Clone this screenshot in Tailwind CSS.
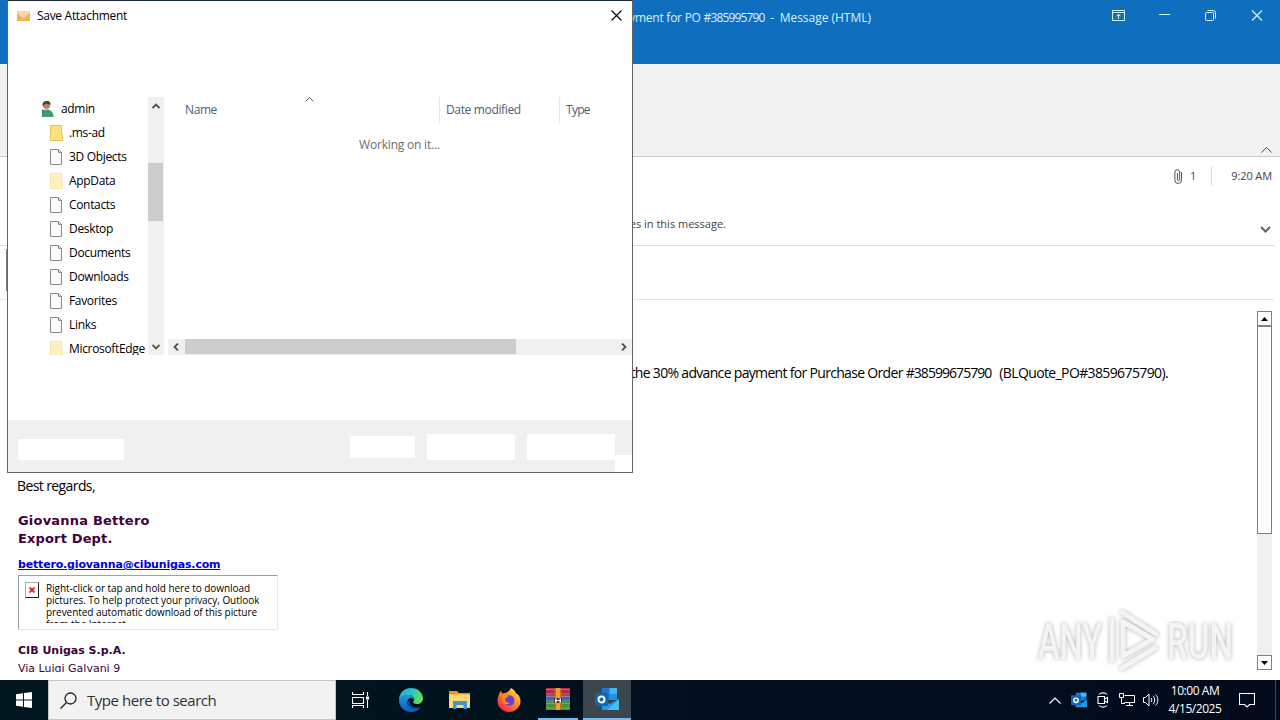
<!DOCTYPE html>
<html lang="en">
<head>
    <meta charset="UTF-8">
    <meta name="viewport" content="width=device-width, initial-scale=1.0">
    <title>Message (HTML)</title>
    <script src="https://cdn.jsdelivr.net/npm/@tailwindcss/browser@4"></script>
</head>
<body class="relative w-[1280px] h-[720px] overflow-hidden bg-white flex flex-col font-['Open_Sans','Noto_Sans',sans-serif] text-xs text-black">

    <!-- Message window title bar -->
    <header class="h-16 shrink-0 bg-[#106ebe] flex items-start justify-between text-[#d5f3ff]">
        <div class="w-[871px] h-9 leading-9 text-right whitespace-pre tracking-[-0.25px]">Payment for PO <span class="tracking-[-0.85px]">#385995790</span>  -  <span class="tracking-[-0.02px]">Message (HTML)</span></div>
        <div class="h-[30px] flex items-center gap-[33px] pr-[17px]">
            <svg class="w-[13px] h-[11px] mr-px" viewBox="0 0 13 11" fill="none" stroke="currentColor"><path d="M.5.5h12v10H.5zM.5 2.5h12M6.5 9V4.5M4.5 6.3l2-2 2 2" /></svg>
            <svg class="w-[11px] h-[11px]" viewBox="0 0 11 11" fill="none" stroke="currentColor"><path d="M0 4.500h11" /></svg>
            <svg class="w-[11px] h-[11px] ml-[2px]" viewBox="0 0 11 11" fill="none" stroke="currentColor"><rect x=".5" y="2.5" width="8" height="8" rx="1" /><path d="M2.5.5h5.500a2.500 2.500 0 0 1 2.500 2.500v5.500" /></svg>
            <svg class="w-[12px] h-[11px] ml-[2px]" viewBox="0 0 12 11" fill="none" stroke="currentColor" stroke-width="1.2"><path d="M1 .5l10 10M11 .5l-10 10" /></svg>
        </div>
    </header>

    <!-- Ribbon -->
    <div class="h-[93px] shrink-0 bg-[#f2f2f2] border-b border-[#cdcdcd] flex justify-end items-end pr-2 pb-[3px]">
        <svg class="w-[11px] h-[6px]" viewBox="0 0 11 6" fill="none" stroke="#505050"><path d="M.5 5.500l5-5 5 5" /></svg>
    </div>

    <!-- Message info -->
    <section class="h-[89px] shrink-0 mr-[6px] border-b border-[#dcdcdc] flex flex-col text-[#444]">
        <div class="h-[38px] flex items-center justify-end pr-[2px] text-[11px]">
            <svg class="w-[9px] h-[15px] mr-[7px]" viewBox="0 0 9 15" fill="none" stroke="#505050"><path d="M7.500 3v8.200a3.300 3.300 0 0 1-6.600 0V3a2.300 2.300 0 0 1 4.700 0v7.500a1.100 1.100 0 0 1-2.200 0V4" /></svg>
            <span class="w-[6px]">1</span>
            <span class="w-px h-5 bg-[#dcdcdc] ml-[15px] mr-[19px]"></span>
            <span class="w-[41px] whitespace-nowrap text-right tracking-[-0.1px]">9:20 AM</span>
        </div>
        <div class="h-[50px] flex items-start justify-between pr-[3px]">
            <span class="w-[726px] text-right pt-5 leading-[18px] text-[11px]">automatic download of some pictures in this message.</span>
            <svg class="w-[11px] h-[7px] mt-[31px]" viewBox="0 0 11 7" fill="none" stroke="#606060" stroke-width="2"><path d="M1 1l4.500 4.500L10 1" /></svg>
        </div>
    </section>
    <div class="h-[54px] shrink-0 mr-[6px] border-b border-[#e3e3e3] pl-[6px] pt-[3px]">
        <div class="w-px h-[42px] bg-[#808080]"></div>
    </div>

    <!-- Message body -->
    <main class="h-[380px] shrink-0 flex justify-between pt-[11px]">
        <div class="w-[1200px] h-[361px] overflow-hidden pl-[18px] whitespace-nowrap">
            <p class="w-[1150px] h-[165px] pt-[51px] text-right text-sm leading-[22px] whitespace-pre tracking-[-0.68px]">details of the 30% advance payment for Purchase Order <span class="tracking-[-0.95px]">#38599675790</span>  <span class="ml-[2px] tracking-[-0.62px]">(BLQuote_PO#3859675790).</span></p>
            <p class="-ml-px h-[36px] text-sm leading-[19px] tracking-[-0.6px]">Best regards,</p>
            <div class="font-['DejaVu_Sans',sans-serif] font-bold text-[#400040]">
                <p class="text-[13px] leading-[18px] tracking-[0.2px]">Giovanna Bettero</p>
                <p class="text-[13px] leading-[18px] tracking-[0.15px]">Export Dept.</p>
                <p class="text-[11px] leading-[16px] mt-[9px] tracking-[-0.17px] text-[#0000d8] underline">bettero.giovanna@cibunigas.com</p>
                <div class="w-[260px] h-[55px] mt-[2px] border border-[#e6e6e6] border-t-[#a0a0a0] border-l-[#a0a0a0] flex pl-[6px] pt-[6px]">
                    <div class="w-[14px] h-[16px] border border-[#b0b0b0] border-r-[#202020] border-b-[#202020] flex items-center justify-center shrink-0">
                        <svg class="w-[6px] h-[6px]" viewBox="0 0 6 6" stroke="#dc1414" stroke-width="1.700"><path d="M.5.5l5 5M5.500.5l-5 5" /></svg>
                    </div>
                    <p class="h-[41px] overflow-hidden ml-[7px] font-['Open_Sans',sans-serif] font-normal text-[10px] leading-[12px] tracking-[-0.05px] text-black">Right-click or tap and hold here to download<br>pictures. To help protect your privacy, Outlook<br>prevented automatic download of this picture<br>from the Internet.</p>
                </div>
                <p class="text-[11px] leading-[18px] mt-[12px]">CIB Unigas S.p.A.</p>
                <p class="text-[11px] leading-[18px] font-normal">Via Luigi Galvani 9</p>
            </div>
        </div>
        <!-- Scrollbar -->
        <div class="w-[15px] h-[359px] mr-2 bg-[#f0f0f0] flex flex-col">
            <div class="h-[15px] border border-[#808080] bg-white flex items-center justify-center">
                <svg class="w-[7px] h-[4px]" viewBox="0 0 7 4"><path d="M0 4L3.500 0 7 4z" /></svg>
            </div>
            <div class="h-[208px] border border-[#808080] bg-white"></div>
            <div class="h-[15px] mt-auto border border-[#808080] bg-white flex items-center justify-center">
                <svg class="w-[7px] h-[4px]" viewBox="0 0 7 4"><path d="M0 0h7L3.500 4z" /></svg>
            </div>
        </div>
    </main>

    <!-- Watermark -->
    <div class="absolute left-[1036px] top-[608px] w-[200px] h-[66px]">
        <svg class="w-[200px] h-[66px] drop-shadow-[0_0_2px_#b4b4b4]" viewBox="0 0 200 66">
            <g fill="#f4f4f4" font-family="Roboto" font-weight="500" font-size="50">
                <text x="2" y="51" textLength="64" lengthAdjust="spacingAndGlyphs">ANY</text>
                <text x="131" y="51" textLength="66" lengthAdjust="spacingAndGlyphs">RUN</text>
            </g>
            <g fill="none" stroke="#f4f4f4" stroke-width="5" stroke-linejoin="round" stroke-linecap="round">
                <path d="M87 14v34l30-17zM76 52V12" />
                <path d="M87 5l33 21M86 60l33-20" />
            </g>
        </svg>
    </div>

    <!-- Taskbar -->
    <footer class="h-10 shrink-0 bg-gradient-to-r from-[#00161c] to-[#020a1c] flex items-stretch text-white">
        <div class="w-12 flex items-center justify-center">
            <svg class="w-4 h-4" viewBox="0 0 16 16" fill="#fff"><path d="M0 2.200L7 1.200v6.300H0zM8 1.100L16 0v7.500H8zM0 8.500h7v6.300l-7-1zM8 8.500h8V16l-8-1.100z" /></svg>
        </div>
        <div class="w-72 bg-[#f2f2f2] border border-[#c4c4c4] flex items-center pl-[11px] text-[#303030]">
            <svg class="w-[17px] h-[17px] mr-[10px]" viewBox="0 0 17 17" fill="none" stroke="#202020" stroke-width="1.300"><circle cx="10.500" cy="6.500" r="5.500" /><path d="M6.500 10.500L.5 16.500" /></svg>
            <span class="text-[15px] tracking-[-0.46px]">Type here to search</span>
        </div>
        <div class="w-12 flex items-center justify-center">
            <svg class="w-[17px] h-[16px]" viewBox="0 0 17 16" fill="none" stroke="#fff"><path d="M.5 0v2.500h11V0M.5 5.500h11v6H.5zM.5 16v-2.500h11V16M15.500 0v4M15.500 8v8" stroke-width="1.100" /><path d="M14 4.500h3v3h-3z" fill="#fff" stroke="none" /></svg>
        </div>
        <!-- Edge -->
        <div class="w-[54px] flex items-center justify-center">
            <svg class="w-6 h-6" viewBox="0 0 24 24">
                <defs>
                    <linearGradient id="edgeTop" x1="0" y1="0" x2="1" y2=".3"><stop offset="0" stop-color="#2aa5e8" /><stop offset=".6" stop-color="#2fc5c0" /><stop offset="1" stop-color="#66db55" /></linearGradient>
                    <linearGradient id="edgeLow" x1="0" y1="0" x2="0" y2="1"><stop offset="0" stop-color="#1a9be0" /><stop offset="1" stop-color="#0d5cb4" /></linearGradient>
                </defs>
                <path d="M0 12C0 5 5 0 12 0c7 0 12 5 12 10.500 0 3.500-2.700 5.500-6 5.500-2.500 0-3.900-.8-3.900-1.700 0-.6 1.100-1 1.100-2.800 0-2.500-2.500-4.500-6-4.500C4.500 7 1.500 9.500 0 12z" fill="url(#edgeTop)" />
                <path d="M0 12C1 9 4.500 7 9 7c3.500 0 6.200 2 6.200 4.500-1-1.300-2.200-1.800-3.600-1.500C9 10.500 8 13 8.500 15.500c.8 3.500 4 5.500 8 5.500 2 0 4-.8 5.500-2-2 3-5.500 5-10 5C5 24 0 18.500 0 12z" fill="url(#edgeLow)" />
                <path d="M8.500 15.500c.8 3.500 4 5.500 8 5.500 2 0 4-.8 5.500-2-1 .3-2 .6-3.500.6-5 0-8-3.100-7.500-6.600-.8-.7-2.800 0-2.500 2.500z" fill="#0b4a9a" />
            </svg>
        </div>
        <!-- Explorer -->
        <div class="w-[43px] flex items-center justify-center">
            <svg class="w-[21px] h-[18px]" viewBox="0 0 21 18"><path d="M0 0h8l2 2h11v6H0z" fill="#e39a1f" /><path d="M0 3.500h21V17H0z" fill="#ffd970" /><path d="M4 10h14v8h-3.500v-4h-7v4H4z" fill="#3f95d2" /></svg>
        </div>
        <!-- Firefox -->
        <div class="w-[55px] flex items-center justify-center">
            <svg class="w-6 h-6" viewBox="0 0 24 24">
                <defs><linearGradient id="fox" x1="1" y1="0" x2=".2" y2="1"><stop offset="0" stop-color="#fff04a" /><stop offset=".45" stop-color="#ff9420" /><stop offset="1" stop-color="#f7194f" /></linearGradient></defs>
                <path d="M14 0c3 1.500 4.500 3.500 5 5.500 1.500 0 4.500 3 4.500 7.500C23.500 19 18.500 24 12 24S.5 19 .5 13c0-4 1.500-7.500 3.500-10.500L5 5.500l3-.5C9.500 5 12 3.500 14 0z" fill="url(#fox)" />
                <circle cx="12.300" cy="12.500" r="5.200" fill="#6a3fd0" />
                <path d="M5.500 8c2-1.500 4-1 6 .8-1 .2-2 1.200-3.500 1.500-.5 3 2 5 5 4.200C11 17.500 5.500 17 5 12z" fill="#ff8a20" />
            </svg>
        </div>
        <!-- WinRAR -->
        <div class="w-11 mr-[3px] flex flex-col items-center">
            <div class="h-[38px] flex items-center">
                <svg class="w-6 h-[22px]" viewBox="0 0 24 22"><path d="M0 0h24v7H0z" fill="#b32846" /><path d="M0 7h24v7H0z" fill="#4562b5" /><path d="M0 14h24v8H0z" fill="#43923c" /><path d="M0 1.500h24M0 8.500h24M0 15.500h24M0 6h24M0 13h24M0 20h24" stroke="#d8c8b0" stroke-width=".6" opacity=".7" /><path d="M8.500 0h7v22h-7z" fill="#c8681e" /><path d="M10 0h4v22h-4z" fill="#f0a030" /><rect x="8" y="10" width="8" height="5" fill="#4c3420" /><path d="M9 10.500h1.500V15H9zM13.500 10.500H15V15h-1.500zM10.500 12h3v1h-3z" fill="#f3ecd8" /></svg>
            </div>
            <div class="w-10 h-[2px] bg-[#76b9ed]"></div>
        </div>
        <!-- Outlook -->
        <div class="w-12 bg-[#3c474d] flex flex-col items-center">
            <div class="h-[38px] flex items-center">
                <svg class="w-6 h-[22px]" viewBox="0 0 24 22"><path d="M7 0h15v12H7z" fill="#1779cf" /><path d="M14.500 0H22v6h-7.500z" fill="#43b5f3" /><path d="M14.500 6H22v6h-7.500z" fill="#2092e2" /><path d="M7 12l8 4 9-5v11H7z" fill="#1f9ae8" /><path d="M24 11v11H12z" fill="#47bdf5" /><rect y="5" width="13" height="13" rx="1" fill="#0f66b8" /><circle cx="6.500" cy="11.500" r="3" fill="none" stroke="#fff" stroke-width="1.900" /></svg>
            </div>
            <div class="w-12 h-[2px] bg-[#76b9ed]"></div>
        </div>
        <!-- Tray -->
        <div class="ml-auto flex items-center">
            <svg class="w-3 h-[7px] mr-[10px]" viewBox="0 0 12 7" fill="none" stroke="#fff" stroke-width="1.200"><path d="M.5 6.500l5.500-5.500 5.500 5.500" /></svg>
            <svg class="w-4 h-4 mr-[10px]" viewBox="0 0 24 22"><path d="M7 0h16v12H7z" fill="#1779cf" /><path d="M14.500 0H23v6h-8.500z" fill="#43b5f3" /><path d="M7 12l8 4 9-5v11H7z" fill="#1f9ae8" /><rect y="4" width="15" height="15" rx="1" fill="#0f66b8" /><circle cx="7.500" cy="11.500" r="3.300" fill="none" stroke="#fff" stroke-width="2.200" /></svg>
            <svg class="w-3 h-4 mr-[10px]" viewBox="0 0 12 16" fill="none" stroke="#fff" stroke-width="1.100"><path d="M2 2.500C4 .3 8 .3 10 2.500M2 13.500c2 2.200 6 2.200 8 0M1 4.500h6.500v7H1zM7.500 7l3-1.500v5l-3-1.500" /></svg>
            <svg class="w-4 h-[14px] mr-2" viewBox="0 0 16 14" fill="none" stroke="#fff"><path d="M5.500 2.500h10v7h-10M10.500 9.500v3M7 12.500h7M.5.500h4v4h-4zM2.500 4.500v6h3.500" /></svg>
            <svg class="w-4 h-[14px] mr-[9px]" viewBox="0 0 16 14" fill="none" stroke="#fff"><path d="M.5 4.500h2L6 1v12L2.500 9.500h-2zM8 5c1 1.200 1 2.800 0 4M10.300 3.200c2 2.200 2 5.400 0 7.600M12.600 1.500c3 3 3 8 0 11" /></svg>
            <div class="w-[54px] mr-[17px] text-center text-xs leading-[18px] whitespace-nowrap tracking-[-0.45px]">
                <div>10:00 AM</div>
                <div>4/15/2025</div>
            </div>
            <svg class="w-4 h-4 mr-[20px]" viewBox="0 0 16 16" fill="none" stroke="#fff" stroke-width="1.100"><path d="M.5 1.500h15v11h-5L8 15l-2.500-2.500h-5z" /></svg>
            <div class="w-px h-10 bg-[#3f4753] mr-[4px]"></div>
        </div>
    </footer>

    <!-- Save Attachment dialog -->
    <div class="absolute left-[7px] top-0 w-[626px] h-[473px] bg-white border border-[#646464] border-t-[#1c2b3c] flex flex-col">
        <div class="h-[29px] shrink-0 flex items-center pl-[9px] pr-[10px]">
            <svg class="w-[13px] h-[10px] mr-[7px]" viewBox="0 0 13 10"><path d="M0 0h13v10H0z" fill="#f0b45e" /><path d="M0 0h13L6.500 6z" fill="#fbd998" /><path d="M0 1l6.500 5.500L13 1" fill="none" stroke="#fff3dc" /></svg>
            <span class="tracking-[-0.3px]">Save Attachment</span>
            <svg class="w-[11px] h-[11px] ml-auto" viewBox="0 0 11 11" stroke="#000" stroke-width="1.100"><path d="M.5.5l10 10M10.500.5l-10 10" /></svg>
        </div>

        <div class="h-[258px] shrink-0 mt-[67px] flex">
            <!-- Folder tree -->
            <ul id="tree" class="w-[140px] overflow-hidden whitespace-nowrap tracking-[-0.33px]">
                <li class="h-6 flex items-center pl-[33px]">
                    <svg class="w-[13px] h-4 mr-[7px]" viewBox="0 0 13 16"><path d="M1 16c-1-5 2-7.500 5-7.500s6.500 2 6.500 7.500z" fill="#3f9c78" /><circle cx="5.500" cy="4.500" r="3.500" fill="#b98264" /><path d="M1.500 5C1 1 4 0 6 0s4 1.500 3.500 4C7 2.500 5 2.500 4 3z" fill="#4a3a34" /><path d="M1 8l3 2-3 4z" fill="#5d6a80" /></svg>
                    admin
                </li>
            </ul>
            <div class="w-4 bg-[#f0f0f0] flex flex-col items-center">
                <svg class="w-2 h-[6px] mt-[6px] mr-px" viewBox="0 0 8 6" fill="none" stroke="#505050" stroke-width="1.800"><path d="M.5 5L4 1.500 7.500 5" /></svg>
                <div class="w-[15px] h-[58px] mt-[54px] mr-px bg-[#cdcdcd]"></div>
                <svg class="w-2 h-[6px] mt-auto mb-[5px] mr-px" viewBox="0 0 8 6" fill="none" stroke="#505050" stroke-width="1.800"><path d="M.5 1L4 4.500 7.500 1" /></svg>
            </div>

            <!-- File list -->
            <div class="w-[464px] ml-1 flex flex-col">
                <div class="h-[26px] flex items-center text-[#4c607a] leading-[26px]">
                    <span class="w-[272px] pl-[17px] flex justify-between border-r border-[#e5e5e5] tracking-[-0.4px]">Name
                        <svg class="w-[9px] h-[5px] mr-[125px]" viewBox="0 0 9 5" fill="none" stroke="#606060"><path d="M.5 4.500l4-4 4 4" /></svg>
                    </span>
                    <span class="w-[120px] pl-[6px] border-r border-[#e5e5e5] tracking-[-0.35px]">Date modified</span>
                    <span class="pl-[6px] tracking-[-0.7px]">Type</span>
                </div>
                <p class="mt-[13px] pr-px text-center text-[#6d6d6d] leading-[18px] tracking-[-0.2px]">Working on it...</p>
                <div class="h-4 mt-auto bg-[#f0f0f0] flex items-center pl-[5px] pr-[5px]">
                    <svg class="w-[6px] h-2" viewBox="0 0 6 8" fill="none" stroke="#505050" stroke-width="1.800"><path d="M5 .5L1.500 4 5 7.500" /></svg>
                    <div class="w-[331px] h-[15px] ml-[6px] mb-px bg-[#cdcdcd]"></div>
                    <svg class="w-[6px] h-2 ml-auto" viewBox="0 0 6 8" fill="none" stroke="#505050" stroke-width="1.800"><path d="M1 .5L4.500 4 1 7.500" /></svg>
                </div>
            </div>
        </div>

        <!-- Dialog buttons -->
        <div class="h-[52px] mt-auto bg-[#f0f0f0] flex items-start">
            <div class="w-[106px] h-[21px] ml-[10px] mt-[19px] bg-white"></div>
            <div class="w-[65px] h-[22px] ml-[226px] mt-4 bg-white"></div>
            <div class="w-[88px] h-[26px] ml-3 mt-[14px] bg-white"></div>
            <div class="w-[88px] h-[26px] ml-3 mt-[14px] bg-white"></div>
            <div class="w-[17px] h-[17px] mt-[35px] bg-white"></div>
        </div>
    </div>

    <script>
        const folderIcon = (fill, edge) => `<svg class="w-[13px] h-4 mr-[6px]" viewBox="0 0 13 16"><path d="M.5.5h11v9h1v6H.5z" fill="${fill}" stroke="${edge}" /></svg>`;
        const icons = {
            folder: folderIcon('#ffe17d', '#e9c255'),
            hidden: folderIcon('#fff0be', '#f5e3aa'),
            file: '<svg class="w-[13px] h-4 mr-[6px]" viewBox="0 0 13 16"><path d="M.5.5h8l3 3v12H.5z" fill="#fafafa" stroke="#8a8a8a" /><path d="M8.500.5v3h3" fill="none" stroke="#8a8a8a" /></svg>'
        };
        const items = [
            ['.ms-ad', 'folder'],
            ['3D Objects', 'file'],
            ['AppData', 'hidden'],
            ['Contacts', 'file'],
            ['Desktop', 'file'],
            ['Documents', 'file'],
            ['Downloads', 'file'],
            ['Favorites', 'file'],
            ['Links', 'file'],
            ['MicrosoftEdge', 'hidden']
        ];
        const tree = document.getElementById('tree');
        items.forEach(([name, type]) => {
            tree.insertAdjacentHTML('beforeend', `<li class="h-6 flex items-center pl-[42px]">${icons[type]}${name}</li>`);
        });
    </script>
</body>
</html>
